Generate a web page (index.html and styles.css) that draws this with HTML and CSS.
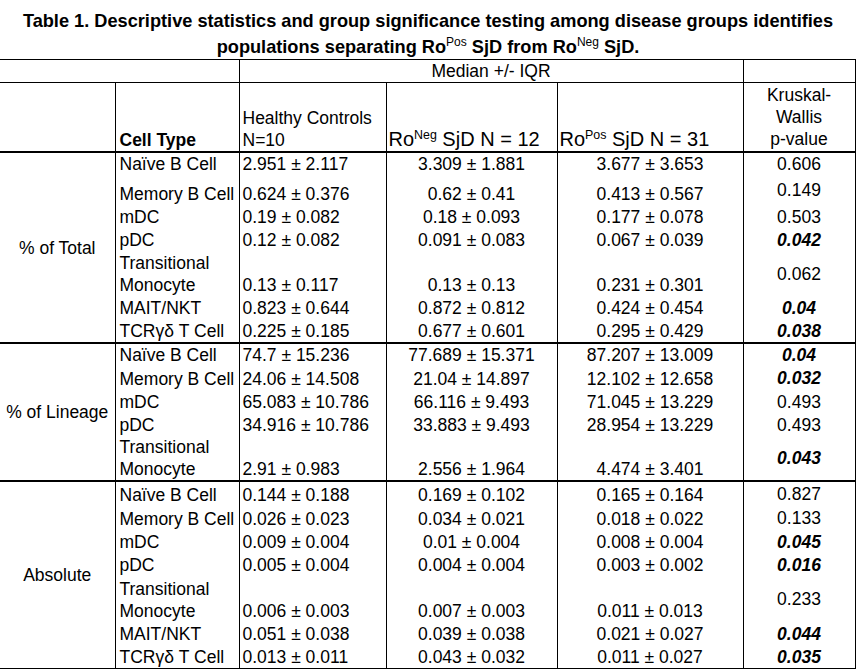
FILE: index.html
```html
<!DOCTYPE html>
<html lang="en">
<head>
<meta charset="utf-8">
<title>Table 1</title>
<link rel="stylesheet" href="styles.css">
</head>
<body>
<h1 class="title">Table 1. Descriptive statistics and group significance testing among disease groups identifies<br>populations separating Ro<span class="sup">Pos</span> SjD from Ro<span class="sup">Neg</span> SjD.</h1>
<table class="stats">
  <colgroup>
    <col class="c-group">
    <col class="c-type">
    <col class="c-hc">
    <col class="c-neg">
    <col class="c-pos">
    <col class="c-p">
  </colgroup>
  <thead>
    <tr class="h1">
      <td colspan="2" class="g"></td>
      <td colspan="3" class="ctr">Median +/- IQR</td>
      <td></td>
    </tr>
    <tr class="h2">
      <td class="g"></td>
      <td class="type"><b>Cell Type</b></td>
      <td class="hc">Healthy Controls<br>N=10</td>
      <td class="ro">Ro<span class="sup">Neg</span> SjD N = 12</td>
      <td class="ro">Ro<span class="sup">Pos</span> SjD N = 31</td>
      <td class="pv">Kruskal-<br>Wallis<br>p-value</td>
    </tr>
  </thead>
  <tbody>
    <tr class="r22">
      <td rowspan="7" class="g">% of Total</td>
      <td class="type">Naïve B Cell</td><td class="hc">2.951 ± 2.117</td><td class="ctr">3.309 ± 1.881</td><td class="ctr">3.677 ± 3.653</td><td class="pv">0.606</td>
    </tr>
    <tr class="r30">
      <td class="type">Memory B Cell</td><td class="hc">0.624 ± 0.376</td><td class="ctr">0.62 ± 0.41</td><td class="ctr">0.413 ± 0.567</td><td class="pv">0.149</td>
    </tr>
    <tr class="r23">
      <td class="type">mDC</td><td class="hc">0.19 ± 0.082</td><td class="ctr">0.18 ± 0.093</td><td class="ctr">0.177 ± 0.078</td><td class="pv">0.503</td>
    </tr>
    <tr class="r23">
      <td class="type">pDC</td><td class="hc">0.12 ± 0.082</td><td class="ctr">0.091 ± 0.083</td><td class="ctr">0.067 ± 0.039</td><td class="pv sig">0.042</td>
    </tr>
    <tr class="r45">
      <td class="type">Transitional Monocyte</td><td class="hc">0.13 ± 0.117</td><td class="ctr">0.13 ± 0.13</td><td class="ctr">0.231 ± 0.301</td><td class="pv">0.062</td>
    </tr>
    <tr class="r23">
      <td class="type">MAIT/NKT</td><td class="hc">0.823 ± 0.644</td><td class="ctr">0.872 ± 0.812</td><td class="ctr">0.424 ± 0.454</td><td class="pv sig">0.04</td>
    </tr>
    <tr class="r23">
      <td class="type">TCRγδ T Cell</td><td class="hc">0.225 ± 0.185</td><td class="ctr">0.677 ± 0.601</td><td class="ctr">0.295 ± 0.429</td><td class="pv sig">0.038</td>
    </tr>
  </tbody>
  <tbody>
    <tr class="r22">
      <td rowspan="5" class="g">% of Lineage</td>
      <td class="type">Naïve B Cell</td><td class="hc">74.7 ± 15.236</td><td class="ctr">77.689 ± 15.371</td><td class="ctr">87.207 ± 13.009</td><td class="pv sig">0.04</td>
    </tr>
    <tr class="r24">
      <td class="type">Memory B Cell</td><td class="hc">24.06 ± 14.508</td><td class="ctr">21.04 ± 14.897</td><td class="ctr">12.102 ± 12.658</td><td class="pv sig">0.032</td>
    </tr>
    <tr class="r23">
      <td class="type">mDC</td><td class="hc">65.083 ± 10.786</td><td class="ctr">66.116 ± 9.493</td><td class="ctr">71.045 ± 13.229</td><td class="pv">0.493</td>
    </tr>
    <tr class="r23">
      <td class="type">pDC</td><td class="hc">34.916 ± 10.786</td><td class="ctr">33.883 ± 9.493</td><td class="ctr">28.954 ± 13.229</td><td class="pv">0.493</td>
    </tr>
    <tr class="r44">
      <td class="type">Transitional Monocyte</td><td class="hc">2.91 ± 0.983</td><td class="ctr">2.556 ± 1.964</td><td class="ctr">4.474 ± 3.401</td><td class="pv sig">0.043</td>
    </tr>
  </tbody>
  <tbody>
    <tr class="r24">
      <td rowspan="7" class="g">Absolute</td>
      <td class="type">Naïve B Cell</td><td class="hc">0.144 ± 0.188</td><td class="ctr">0.169 ± 0.102</td><td class="ctr">0.165 ± 0.164</td><td class="pv">0.827</td>
    </tr>
    <tr class="r24">
      <td class="type">Memory B Cell</td><td class="hc">0.026 ± 0.023</td><td class="ctr">0.034 ± 0.021</td><td class="ctr">0.018 ± 0.022</td><td class="pv">0.133</td>
    </tr>
    <tr class="r23">
      <td class="type">mDC</td><td class="hc">0.009 ± 0.004</td><td class="ctr">0.01 ± 0.004</td><td class="ctr">0.008 ± 0.004</td><td class="pv sig">0.045</td>
    </tr>
    <tr class="r23">
      <td class="type">pDC</td><td class="hc">0.005 ± 0.004</td><td class="ctr">0.004 ± 0.004</td><td class="ctr">0.003 ± 0.002</td><td class="pv sig">0.016</td>
    </tr>
    <tr class="r46">
      <td class="type">Transitional Monocyte</td><td class="hc">0.006 ± 0.003</td><td class="ctr">0.007 ± 0.003</td><td class="ctr">0.011 ± 0.013</td><td class="pv">0.233</td>
    </tr>
    <tr class="r23">
      <td class="type">MAIT/NKT</td><td class="hc">0.051 ± 0.038</td><td class="ctr">0.039 ± 0.038</td><td class="ctr">0.021 ± 0.027</td><td class="pv sig">0.044</td>
    </tr>
    <tr class="r23">
      <td class="type">TCRγδ T Cell</td><td class="hc">0.013 ± 0.011</td><td class="ctr">0.043 ± 0.032</td><td class="ctr">0.011 ± 0.027</td><td class="pv sig">0.035</td>
    </tr>
  </tbody>
</table>
</body>
</html>
```

FILE: styles.css
```css
html, body {
  margin: 0;
  padding: 0;
  background: #ffffff;
  color: #000000;
  font-family: "Liberation Sans", Arial, sans-serif;
}

.title {
  margin: 0;
  padding-top: 8px;
  height: 51px;
  font-size: 18.2px;
  font-weight: bold;
  line-height: 26px;
  text-align: center;
}

.sup {
  font-size: 0.62em;
  line-height: 0;
  vertical-align: 0.55em;
}

.title .sup {
  font-weight: normal;
  font-size: 12px;
}

.stats {
  border-collapse: collapse;
  table-layout: fixed;
  width: 855px;
  font-size: 17.5px;
  line-height: 22px;
}

.c-group { width: 115px; }
.c-type { width: 124px; }
.c-hc { width: 147px; }
.c-neg { width: 171px; }
.c-pos { width: 186px; }
.c-p { width: 112px; }

.stats td {
  padding: 0;
  border-left: 1px solid #000;
  border-right: 1px solid #000;
  vertical-align: bottom;
  text-align: left;
}

.stats td.g {
  border-left: none;
  text-align: center;
  vertical-align: middle;
}

.stats .h1 td {
  border-top: 1px solid #000;
  border-bottom: 1px solid #000;
  height: 22px;
  line-height: 22px;
  text-align: center;
}

.stats .h2 td {
  height: 68px;
  line-height: 22px;
}

.stats .h2 td.ro {
  font-size: 20px;
  line-height: 24px;
  padding-left: 2px;
}

.stats tbody tr:first-child td {
  border-top: 2px solid #000;
}

.stats tbody:last-child tr:last-child td,
.stats tbody:last-child td.g {
  border-bottom: 1px solid #000;
}

.stats td.type {
  padding: 0 2px 0 4px;
}

.stats td.hc {
  padding-left: 3px;
}

.stats td.ctr {
  text-align: center;
}

.stats td.pv {
  text-align: center;
  vertical-align: middle;
}

.stats td.sig {
  font-weight: bold;
  font-style: italic;
}

.r22 td { height: 22px; }
.r23 td { height: 23px; }
.r24 td { height: 24px; }
.r30 td { height: 30px; }
.r44 td { height: 44px; }
.r45 td { height: 45px; }
.r46 td { height: 46px; }
```
